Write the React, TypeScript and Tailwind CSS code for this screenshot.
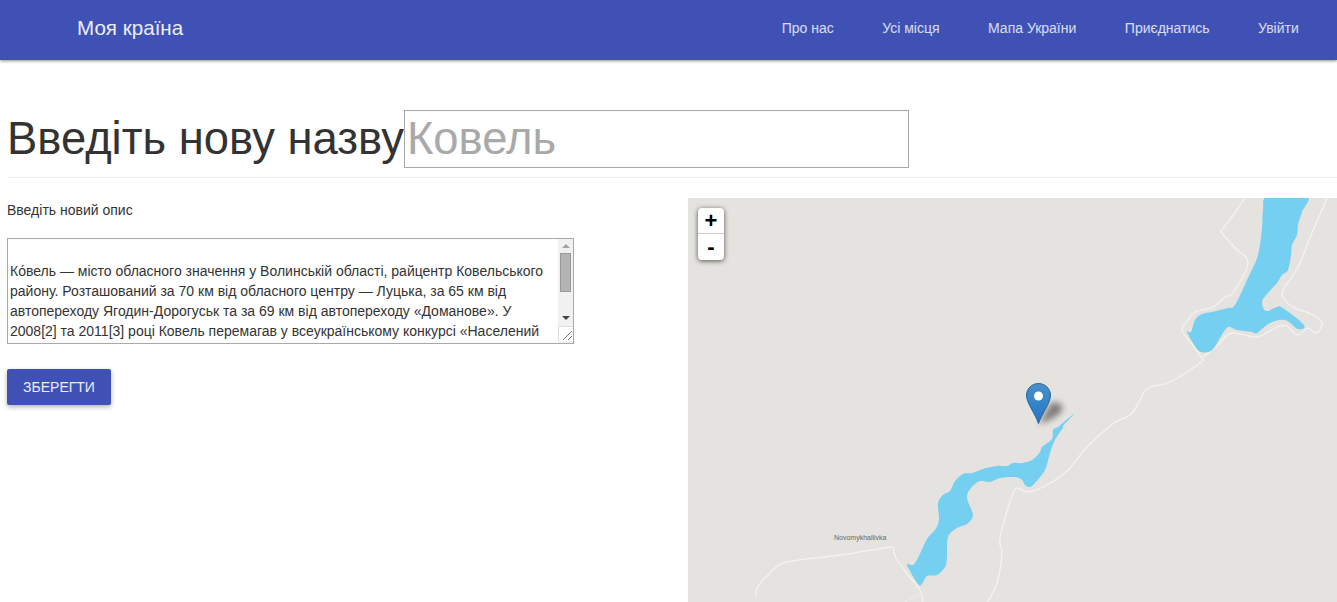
import React from 'react';

const navLinks = ['Про нас', 'Усі місця', 'Мапа України', 'Приєднатись', 'Увійти'];

const description =
  '\nКо́вель — місто обласного значення у Волинській області, райцентр Ковельського району. Розташований за 70 км від обласного центру — Луцька, за 65 км від автопереходу Ягодин-Дорогуськ та за 69 км від автопереходу «Доманове». У 2008[2] та 2011[3] році Ковель перемагав у всеукраїнському конкурсі «Населений пункт найкращого благоустрою».';

type Pt = [number, number];

// catmull-rom through the traced points so the shapes don't look polygonal
const smooth = (pts: Pt[], closed = false) => {
  const n = pts.length;
  const at = (i: number): Pt => (closed ? pts[(i + n) % n] : pts[Math.max(0, Math.min(n - 1, i))]);
  let d = `M${pts[0][0]} ${pts[0][1]}`;
  const last = closed ? n : n - 1;
  for (let i = 0; i < last; i++) {
    const [p0, p1, p2, p3] = [at(i - 1), at(i), at(i + 1), at(i + 2)];
    const c1x = p1[0] + (p2[0] - p0[0]) / 6;
    const c1y = p1[1] + (p2[1] - p0[1]) / 6;
    const c2x = p2[0] - (p3[0] - p1[0]) / 6;
    const c2y = p2[1] - (p3[1] - p1[1]) / 6;
    d += ` C${c1x.toFixed(1)} ${c1y.toFixed(1)} ${c2x.toFixed(1)} ${c2y.toFixed(1)} ${p2[0]} ${p2[1]}`;
  }
  return closed ? d + ' Z' : d;
};

const lowerLake: Pt[] = [
  [1074, 414], [1065, 421], [1058, 427], [1053, 430], [1052, 439], [1042, 447], [1040, 452], [1032, 460],
  [1022, 463], [1013, 463], [1007, 466], [997, 466], [983, 469], [972, 473], [963, 474], [955, 481],
  [950, 491], [943, 495], [938, 503], [939, 520], [935, 530], [927, 539], [918, 558], [913, 565],
  [907, 565], [918, 584], [922, 584], [927, 576], [937, 575], [945, 567], [947, 557], [948, 537],
  [957, 528], [967, 524], [973, 515], [967, 498], [971, 488], [980, 481], [990, 482], [1000, 478],
  [1015, 477], [1022, 480], [1025, 485], [1030, 487], [1035, 483], [1045, 470], [1050, 453], [1055, 440],
  [1063, 428], [1065, 427], [1063, 426],
];

const upperLake: Pt[] = [
  [1268, 196], [1263, 210], [1262, 228], [1258, 255], [1248, 278], [1235, 305], [1228, 308], [1220, 310],
  [1212, 312], [1202, 314], [1195, 320], [1191, 332], [1187, 332], [1198, 350], [1208, 352], [1214, 348],
  [1220, 338], [1228, 327], [1237, 330], [1252, 332], [1257, 333], [1270, 323], [1285, 320], [1298, 329],
  [1304, 325], [1283, 308], [1277, 307], [1266, 311], [1262, 302], [1267, 294], [1277, 283], [1282, 275],
  [1288, 270], [1291, 255], [1292, 245], [1297, 235], [1298, 225], [1302, 212], [1307, 196],
];

const roads: Pt[][] = [
  [
    [1245, 198], [1234, 214], [1222, 230], [1222, 233], [1235, 248], [1248, 263], [1233, 293], [1225, 297], [1213, 307], [1195, 312],
    [1188, 320], [1182, 330], [1191, 343], [1201, 357], [1200, 363], [1170, 382], [1148, 388], [1139, 402], [1130, 415], [1114, 423], [1087, 447],
    [1068, 470], [1047, 485], [1028, 492], [1020, 489], [1013, 493], [1000, 538], [1002, 553], [997, 583],
    [987, 603],
  ],
  [
    [1327, 198], [1312, 233], [1298, 267], [1283, 290], [1285, 300], [1295, 308], [1313, 315], [1322, 323], [1318, 332],
    [1313, 332], [1308, 328], [1297, 335], [1287, 326], [1277, 327], [1257, 337], [1232, 333], [1218, 345], [1203, 357],
  ],
  [
    [756, 597], [757, 588], [770, 573], [787, 562], [840, 555], [885, 548], [893, 547], [894, 552], [897, 560], [908, 575], [920, 590], [923, 603],
  ],
];

const MapView = () => (
  <div className="relative h-[404px] flex-1 overflow-hidden bg-[#e5e3df]">
    <svg viewBox="688 198 649 404" className="absolute inset-0 h-full w-full blur-[0.4px]">
      {roads.map((pts, i) => (
        <path key={i} d={smooth(pts)} fill="none" stroke="#f4f3f0" strokeWidth="1.3" />
      ))}
      <path d="M905 602 L920 593" fill="none" stroke="#ecebe8" strokeWidth="1" />
      <path d={smooth(lowerLake, true)} fill="#75cff0" />
      <path d={smooth(upperLake, true)} fill="#75cff0" />
    </svg>

    <span className="absolute left-[146px] top-[335px] text-[7px] leading-[9px] text-[#666]">
      Novomykhailivka
    </span>

    {/* marker + shadow */}
    <svg width="60" height="50" viewBox="0 0 60 50" className="absolute left-[338px] top-[185px]">
      <defs>
        <linearGradient id="pin" x1="0" y1="0" x2="0" y2="1">
          <stop offset="0" stopColor="#4a8fc8" />
          <stop offset="0.5" stopColor="#3584c9" />
          <stop offset="1" stopColor="#2273c4" />
        </linearGradient>
        <filter id="pinShadow" x="-50%" y="-50%" width="200%" height="200%">
          <feGaussianBlur stdDeviation="3" />
        </filter>
      </defs>
      <path
        d="M12.5 41 L25 20 Q30 18 36 22 Q38 26 33 31 Q24 38 12.5 41 Z"
        fill="#000"
        opacity="0.45"
        filter="url(#pinShadow)"
      />
      <path
        d="M12.5 40.5 C10 32 0.5 20 0.5 12.5 C0.5 5.5 6 0.5 12.5 0.5 C19 0.5 24.5 5.5 24.5 12.5 C24.5 20 15 32 12.5 40.5 Z"
        fill="url(#pin)"
        stroke="#2a6496"
        strokeWidth="1"
      />
      <circle cx="12.5" cy="13" r="4.5" fill="#fff" />
    </svg>

    <div className="absolute left-[10px] top-[10px] flex w-[26px] flex-col rounded bg-white text-[22px] font-bold leading-[26px] text-black shadow-[0_1px_5px_rgba(0,0,0,0.65)]">
      <a className="flex h-[26px] items-center justify-center border-b border-[#ccc]">+</a>
      <a className="flex h-[26px] items-center justify-center">-</a>
    </div>
  </div>
);

const App: React.FC = () => {
  return (
    <div className="h-[602px] overflow-hidden bg-white font-['Liberation_Sans',sans-serif] text-[14px] text-[#333]">
      {/* Header */}
      <nav className="flex h-[60px] items-center justify-between bg-[#3f51b5] pb-[4px] pl-[77px] pr-[14px] shadow-[0_1px_3px_rgba(0,0,0,0.45)]">
        <span className="text-[20.6px] text-white/90">Моя країна</span>
        <div className="flex">
          {navLinks.map((link) => (
            <a key={link} className="px-[24.25px] text-[14px] text-white/80">
              {link}
            </a>
          ))}
        </div>
      </nav>

      <div className="pl-[7px]">
        <div className="mt-[50px] flex h-[68px] items-start border-b border-[#eee] text-[45.4px] leading-[58px]">
          <h1 className="h-[58px]">Введіть нову назву</h1>
          <input
            placeholder="Ковель"
            className="h-[58px] w-[505px] border border-[#a9a9a9] px-[2px] outline-none placeholder:text-[#a9a9a9]"
          />
        </div>

        <div className="mt-[20px] flex">
          <div className="w-[681px]">
            <p className="mt-[2px] leading-[20px]">Введіть новий опис</p>

            <div className="mt-[18px] flex h-[106px] w-[567px] border border-[#a9a9a9]">
              <textarea
                readOnly
                value={description}
                className="flex-1 resize-none overflow-hidden px-[2px] py-[2px] leading-[20px] text-[#333] outline-none"
              />
              <div className="flex w-[15px] flex-col items-center bg-[#f1f1f1]">
                <div className="mt-[5px] h-0 w-0 border-x-[4px] border-b-[4px] border-x-transparent border-b-[#a3a3a3]" />
                <div className="mt-[5px] h-[39px] w-[11px] border border-[#999] bg-[#b4b4b4]" />
                <div className="mt-[24px] h-0 w-0 border-x-[4px] border-t-[4px] border-x-transparent border-t-[#444]" />
                <div className="relative mt-[6px] h-[15px] w-[15px] border-l border-t border-[#ddd] bg-white">
                  <svg width="14" height="14" viewBox="0 0 14 14" className="absolute left-0 top-0">
                    <path d="M4 13 L13 4 M9 13 L13 9" stroke="#777" strokeWidth="1" fill="none" />
                  </svg>
                </div>
              </div>
            </div>

            <button className="mt-[25px] h-[36px] w-[104px] rounded-[2px] bg-[#3f51b5] text-[14px] uppercase text-white/90 shadow-[0_2px_5px_rgba(0,0,0,0.3)]">
              Зберегти
            </button>
          </div>

          <MapView />
        </div>
      </div>
    </div>
  );
};

export default App;
